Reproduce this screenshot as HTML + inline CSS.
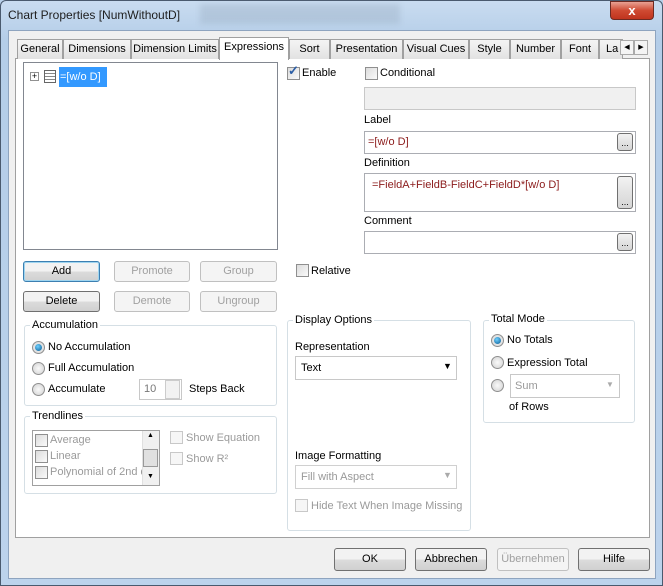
<!DOCTYPE html>
<html><head><style>
*{box-sizing:border-box}
body{margin:0;width:663px;height:586px;overflow:hidden;font-family:"Liberation Sans",sans-serif;font-size:11px;color:#000;background:#b9d1ea}
.a{position:absolute;white-space:nowrap}
.win{position:absolute;left:0;top:0;width:663px;height:586px;background:linear-gradient(#c9dcf0,#b4cde8 40px,#bcd3ec);border:1px solid #4a5a6e;border-radius:6px 6px 0 0}
.client{position:absolute;left:8px;top:30px;width:648px;height:549px;background:#f0f0f0;border:1px solid #8ea4bf}
.tab{position:absolute;top:39px;height:20px;border:1px solid #a0a0a0;border-bottom:none;background:linear-gradient(#f4f4f4,#e2e2e2);padding:3px 0 0 0;text-align:center;white-space:nowrap;overflow:hidden}
.panel{position:absolute;left:15px;top:58px;width:635px;height:480px;background:#fff;border:1px solid #a0a0a0}
.btn{position:absolute;height:21px;border:1px solid #707070;border-radius:3px;background:linear-gradient(#f2f2f2 50%,#dcdcdc 50%,#d0d0d0);text-align:center;line-height:19px;white-space:nowrap}
.dis{border-color:#c0c0c0;background:#f4f4f4;color:#a0a0a0}
.grp{position:absolute;border:1px solid #d5dfe5;border-radius:3px}
.gl{position:absolute;background:#fff;padding:0 2px;white-space:nowrap}
.box{position:absolute;border:1px solid #abadb3;background:#fff;white-space:nowrap;overflow:hidden}
.cb{position:absolute;width:13px;height:13px;border:1px solid #8f8f8f;background:linear-gradient(135deg,#dcdcdc,#fafafa)}
.rd{position:absolute;width:13px;height:13px;border:1px solid #8f8f8f;border-radius:50%;background:radial-gradient(#fafafa,#d0d0d0)}
.rd.on::after{content:"";position:absolute;left:2px;top:2px;width:7px;height:7px;border-radius:50%;background:radial-gradient(circle at 40% 35%,#6ed0ff,#0a5a92)}
.dots{position:absolute;width:16px;height:18px;border:1px solid #707070;border-radius:3px;background:linear-gradient(#f2f2f2,#d5d5d5);font-size:9px;text-align:center;line-height:18px}
.red{color:#8b1a1a}
.g{color:#9a9a9a}
</style></head><body>
<div class="win"></div>
<div class="a" style="left:8px;top:8px;font-size:12px;color:#1e1e1e">Chart Properties [NumWithoutD]</div>
<div class="a" style="left:200px;top:4px;width:200px;height:20px;background:rgba(150,170,190,.35);filter:blur(3px)"></div>
<div class="a" style="left:610px;top:1px;width:44px;height:19px;border:1px solid #6d2a22;border-radius:0 0 4px 4px;background:linear-gradient(#e8a193,#cf4a32 50%,#c0341e);color:#fff;font-weight:bold;text-align:center;line-height:17px;font-size:13px">x</div>
<div class="client"></div>
<div class="panel"></div>
<div class="tab" style="left:17px;width:46px">General</div>
<div class="tab" style="left:63px;width:68px">Dimensions</div>
<div class="tab" style="left:131px;width:88px">Dimension Limits</div>
<div class="tab" style="left:219px;width:70px;top:37px;height:23px;background:#fff;z-index:2">Expressions</div>
<div class="tab" style="left:289px;width:41px">Sort</div>
<div class="tab" style="left:330px;width:73px">Presentation</div>
<div class="tab" style="left:403px;width:66px">Visual Cues</div>
<div class="tab" style="left:469px;width:41px">Style</div>
<div class="tab" style="left:510px;width:51px">Number</div>
<div class="tab" style="left:561px;width:38px">Font</div>
<div class="tab" style="left:599px;width:24px;text-align:left;padding-left:6px">La</div>
<div class="a" style="left:620px;top:40px;width:14px;height:15px;border:1px solid #aaa;background:#f4f4f4;font-size:7px;text-align:center;line-height:13px">◀</div>
<div class="a" style="left:634px;top:40px;width:14px;height:15px;border:1px solid #aaa;background:#f4f4f4;font-size:7px;text-align:center;line-height:13px">▶</div>

<div class="box" style="left:23px;top:62px;width:255px;height:188px;border-color:#828790"></div>
<div class="a" style="left:30px;top:72px;width:9px;height:9px;border:1px solid #919191;font-size:9px;line-height:7px;text-align:center">+</div>
<div class="a" style="left:44px;top:70px;width:12px;height:13px;border:1px solid #666;background:repeating-linear-gradient(#fff 0 2px,#888 2px 3px)"></div>
<div class="a" style="left:59px;top:67px;width:48px;height:20px;background:#3399ff;color:#fff;line-height:20px;padding-left:1px">=[w/o D]</div>

<div class="btn" style="left:23px;top:261px;width:77px;border-color:#3c7fb1;box-shadow:inset 0 0 0 1px #9fd5f0">Add</div>
<div class="btn dis" style="left:114px;top:261px;width:76px">Promote</div>
<div class="btn dis" style="left:200px;top:261px;width:77px">Group</div>
<div class="btn" style="left:23px;top:291px;width:77px">Delete</div>
<div class="btn dis" style="left:114px;top:291px;width:76px">Demote</div>
<div class="btn dis" style="left:200px;top:291px;width:77px">Ungroup</div>

<div class="grp" style="left:24px;top:325px;width:253px;height:81px"></div>
<div class="gl" style="left:30px;top:319px">Accumulation</div>
<div class="rd on" style="left:32px;top:341px"></div><div class="a" style="left:48px;top:341px">No Accumulation</div>
<div class="rd" style="left:32px;top:362px"></div><div class="a" style="left:48px;top:362px">Full Accumulation</div>
<div class="rd" style="left:32px;top:383px"></div><div class="a" style="left:48px;top:383px">Accumulate</div>
<div class="box" style="left:139px;top:379px;width:43px;height:21px;border-color:#c8c8c8;color:#777;padding:3px 0 0 4px">10</div>
<div class="a" style="left:165px;top:380px;width:15px;height:19px;border:1px solid #ccc;background:#f2f2f2"></div>
<div class="a" style="left:189px;top:383px">Steps Back</div>

<div class="grp" style="left:24px;top:416px;width:253px;height:78px"></div>
<div class="gl" style="left:30px;top:410px">Trendlines</div>
<div class="box" style="left:32px;top:430px;width:128px;height:56px;border-color:#a0a0a0"></div>
<div class="cb" style="left:35px;top:434px"></div><div class="a g" style="left:50px;top:434px">Average</div>
<div class="cb" style="left:35px;top:450px"></div><div class="a g" style="left:50px;top:450px">Linear</div>
<div class="cb" style="left:35px;top:466px"></div><div class="a g" style="left:50px;top:466px">Polynomial of 2nd d</div>
<div class="a" style="left:142px;top:431px;width:17px;height:54px;background:#f0f0f0;border-left:1px solid #e0e0e0"></div>
<div class="a" style="left:143px;top:449px;width:15px;height:18px;border:1px solid #999;background:#e0e0e0"></div>
<div class="a" style="left:147px;top:432px;font-size:7px">▲</div><div class="a" style="left:147px;top:473px;font-size:7px">▼</div>
<div class="cb" style="left:170px;top:431px;border-color:#c8c8c8;background:#f6f6f6"></div><div class="a g" style="left:186px;top:432px">Show Equation</div>
<div class="cb" style="left:170px;top:452px;border-color:#c8c8c8;background:#f6f6f6"></div><div class="a g" style="left:186px;top:453px">Show R²</div>

<div class="cb" style="left:287px;top:67px"></div><div class="a" style="left:288px;top:63px;color:#2c5ea6;font-size:13px;font-weight:bold">✓</div>
<div class="a" style="left:302px;top:67px">Enable</div>
<div class="cb" style="left:365px;top:67px"></div><div class="a" style="left:380px;top:67px">Conditional</div>
<div class="box" style="left:364px;top:87px;width:272px;height:23px;background:#f0f0f0;border-color:#c8c8c8"></div>
<div class="a" style="left:364px;top:114px">Label</div>
<div class="box" style="left:364px;top:131px;width:272px;height:23px;padding:4px 0 0 3px"><span class="red">=[w/o D]</span></div>
<div class="dots" style="left:617px;top:133px">...</div>
<div class="a" style="left:364px;top:157px">Definition</div>
<div class="box" style="left:364px;top:173px;width:272px;height:39px;padding:5px 0 0 7px"><span class="red">=FieldA+FieldB-FieldC+FieldD*[w/o D]</span></div>
<div class="dots" style="left:617px;top:176px;height:33px;line-height:50px">...</div>
<div class="a" style="left:364px;top:215px">Comment</div>
<div class="box" style="left:364px;top:231px;width:272px;height:23px"></div>
<div class="dots" style="left:617px;top:233px">...</div>
<div class="cb" style="left:296px;top:264px"></div><div class="a" style="left:311px;top:265px">Relative</div>

<div class="grp" style="left:287px;top:320px;width:184px;height:211px"></div>
<div class="gl" style="left:293px;top:314px">Display Options</div>
<div class="a" style="left:295px;top:341px">Representation</div>
<div class="box" style="left:295px;top:356px;width:162px;height:24px;border-color:#c8c8c8;padding:5px 0 0 5px">Text</div>
<div class="a" style="left:443px;top:361px;font-size:9px">▼</div>
<div class="a" style="left:295px;top:450px">Image Formatting</div>
<div class="box" style="left:295px;top:465px;width:162px;height:24px;border-color:#d0d0d0;padding:5px 0 0 5px;color:#999">Fill with Aspect</div>
<div class="a" style="left:443px;top:470px;font-size:9px;color:#aaa">▼</div>
<div class="cb" style="left:295px;top:499px;border-color:#c8c8c8;background:#f6f6f6"></div><div class="a g" style="left:311px;top:500px">Hide Text When Image Missing</div>

<div class="grp" style="left:483px;top:320px;width:152px;height:103px"></div>
<div class="gl" style="left:489px;top:313px">Total Mode</div>
<div class="rd on" style="left:491px;top:334px"></div><div class="a" style="left:507px;top:334px">No Totals</div>
<div class="rd" style="left:491px;top:356px"></div><div class="a" style="left:507px;top:357px">Expression Total</div>
<div class="rd" style="left:491px;top:379px"></div>
<div class="box" style="left:510px;top:374px;width:110px;height:24px;border-color:#c8c8c8;padding:5px 0 0 4px;color:#999">Sum</div>
<div class="a" style="left:606px;top:380px;font-size:8px;color:#aaa">▼</div>
<div class="a" style="left:509px;top:401px">of Rows</div>

<div class="btn" style="left:334px;top:548px;width:72px;height:23px;line-height:21px">OK</div>
<div class="btn" style="left:415px;top:548px;width:72px;height:23px;line-height:21px">Abbrechen</div>
<div class="btn dis" style="left:497px;top:548px;width:72px;height:23px;line-height:21px">Übernehmen</div>
<div class="btn" style="left:578px;top:548px;width:72px;height:23px;line-height:21px">Hilfe</div>
</body></html>
